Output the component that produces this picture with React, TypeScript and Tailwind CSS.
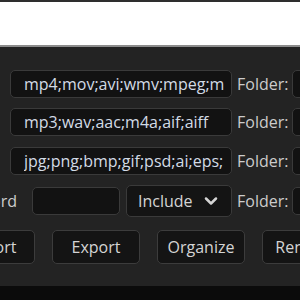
import { ChevronDown } from "lucide-react";

const font = { fontFamily: '"Open Sans", "Noto Sans", sans-serif' };

function FieldRow({ value }: { value: string }) {
  return (
    <div className="flex items-center h-[28px]">
      <div className="ml-[10px] w-[222px] h-[28px] shrink-0 rounded-[5px] border border-[#3a3a3a] bg-[#121212] pl-[13px] pr-[7px]">
        <div className="overflow-hidden whitespace-nowrap text-[16px] leading-[26px] text-[#d2dbe6]">{value}</div>
      </div>
      <span className="ml-[5px] text-[16px] text-[#cccccc] whitespace-nowrap">Folder:</span>
      <div className="ml-[4px] w-[60px] h-[28px] shrink-0 rounded-[5px] border border-[#3a3a3a] bg-[#121212]" />
    </div>
  );
}

function Btn({ label }: { label: string }) {
  return (
    <button className="w-[88px] h-[34px] shrink-0 rounded-[5px] border border-[#3c3c3c] bg-[#141414] text-[16px] text-[#d4d4d4] whitespace-nowrap">
      {label}
    </button>
  );
}

export default function App() {
  return (
    <div className="w-[300px] h-[300px] overflow-hidden bg-[#0b0b0b] flex flex-col" style={font}>
      <div className="h-[47px] shrink-0 bg-white border-t-2 border-t-[#2e2e2e] border-b-2 border-b-[#8c8c8c]" />

      <div className="h-[239px] shrink-0 bg-[#232323] pt-[23px] flex flex-col">
        <div className="flex flex-col gap-[10px]">
          <FieldRow value="mp4;mov;avi;wmv;mpeg;mkv;flv" />
          <FieldRow value="mp3;wav;aac;m4a;aif;aiff" />
          <div className="mt-[1px]">
            <FieldRow value="jpg;png;bmp;gif;psd;ai;eps;" />
          </div>
        </div>

        {/* Keyword row */}
        <div className="flex items-center h-[32px] mt-[10px]">
          <span className="-ml-[50px] w-[67px] shrink-0 text-right text-[16px] text-[#cccccc]">Keyword</span>
          <div className="ml-[15px] w-[88px] h-[28px] shrink-0 rounded-[5px] border border-[#3a3a3a] bg-[#121212]" />
          <div className="ml-[6px] w-[106px] h-[32px] shrink-0 rounded-[5px] border border-[#3a3a3a] bg-[#141414] flex items-center pl-[11px] pr-[10px] text-[16px] text-[#d4d4d4]">
            <span className="flex-1">Include</span>
            <ChevronDown size={20} strokeWidth={3} className="text-[#d4d4d4]" />
          </div>
          <span className="ml-[5px] text-[16px] text-[#cccccc] whitespace-nowrap">Folder:</span>
          <div className="ml-[4px] w-[60px] h-[28px] shrink-0 rounded-[5px] border border-[#3a3a3a] bg-[#121212]" />
        </div>

        {/* Buttons */}
        <div className="flex items-center gap-[17px] mt-[13px] -ml-[53px]">
          <Btn label="Import" />
          <Btn label="Export" />
          <Btn label="Organize" />
          <Btn label="Rename" />
        </div>
      </div>
    </div>
  );
}
